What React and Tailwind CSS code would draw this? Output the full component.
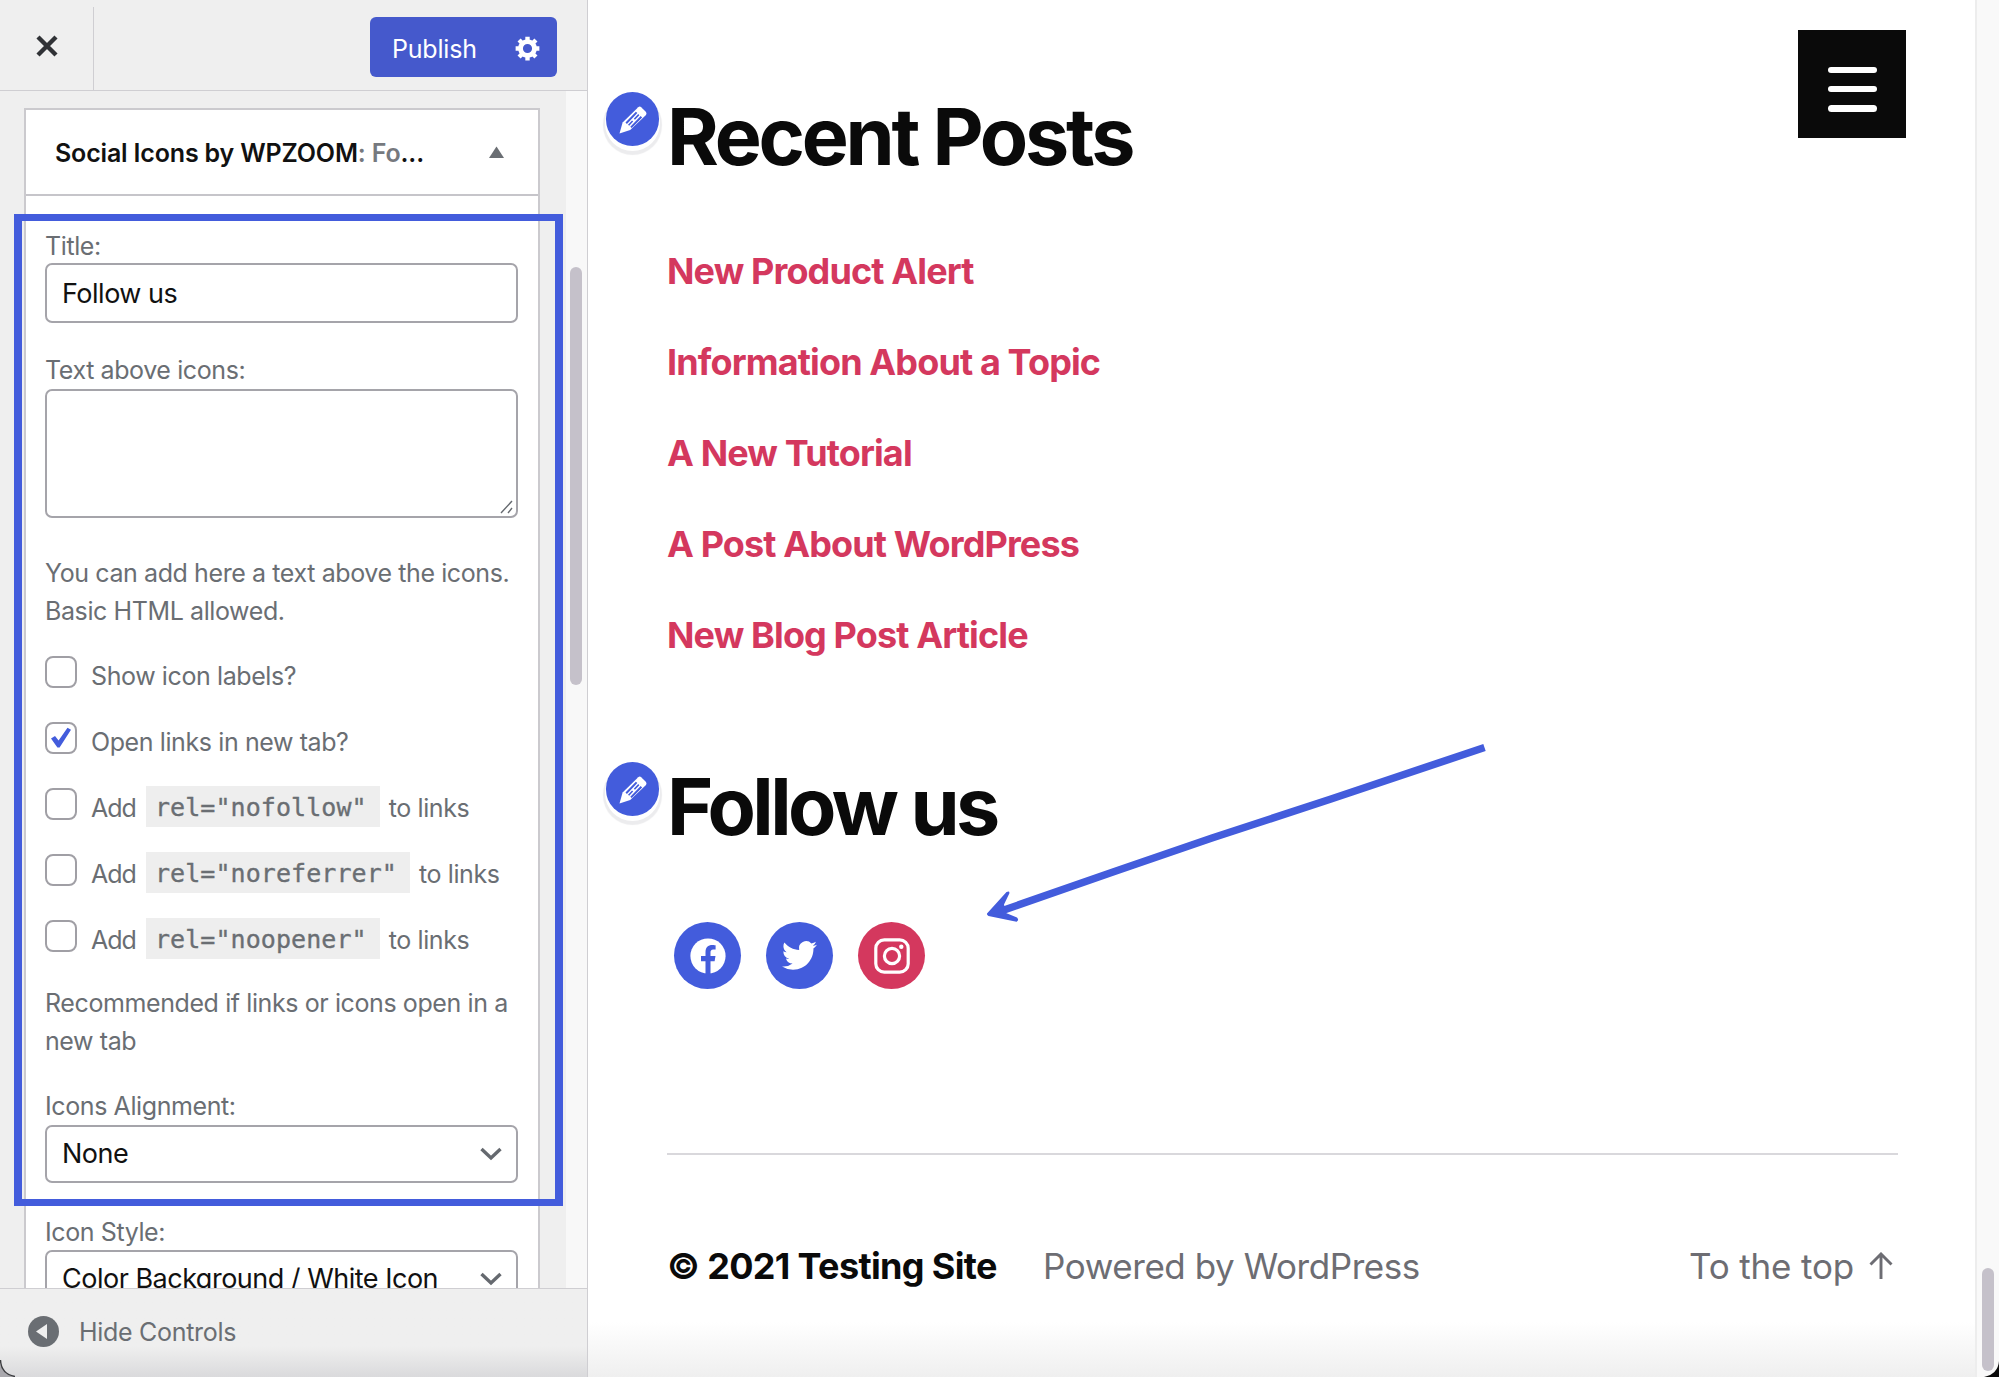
import React from "react";

const label = "block h-[34px] leading-[34px]";
const field = "w-[473px] rounded-[7px] border-2 border-[#a5a4aa] bg-white text-[27px] tracking-[-0.5px] text-[#111]";

function Chevron() {
  return (
    <svg width="22" height="14" viewBox="0 0 22 14" fill="none">
      <path d="M1.5 2 L11 11 L20.5 2" stroke="#65696f" strokeWidth="3.4" />
    </svg>
  );
}

function SelectBox({ value, className }) {
  return (
    <div className={`${field} flex h-[58px] items-center justify-between pr-[14px] pl-[15px] ${className}`}>
      <span className="mt-[1px]">{value}</span>
      <Chevron />
    </div>
  );
}

function CheckRow({ checked, children }) {
  return (
    <div className="flex h-[66px] items-center">
      <span className="-mt-[9px] mr-[14px] flex h-[32px] w-[32px] items-center justify-center rounded-[8px] border-2 border-[#a09fa5] bg-white">
        {checked && (
          <svg width="24" height="22" viewBox="0 0 24 22">
            <path d="M2 11.5 L6 9 L9.6 13.6 L18.5 0.8 L22 2.8 L10.6 20.5 L8.4 20.5 Z" fill="#435cdc" />
          </svg>
        )}
      </span>
      {children}
    </div>
  );
}

function RelRow({ rel }) {
  return (
    <CheckRow>
      <span className="mt-[1px] tracking-[-1px]">Add</span>
      <code className="mr-[9px] ml-[10px] -mt-[3px] h-[41px] bg-[#eeeeee] pr-[13px] pl-[9px] font-['DejaVu_Sans_Mono',monospace] text-[25px] leading-[43px] tracking-[0.08px] [-webkit-text-stroke:0.35px_#6a6e73]">
        {`rel="${rel}"`}
      </code>
      <span className="mt-[1px]">to links</span>
    </CheckRow>
  );
}

function Sidebar() {
  return (
    <aside className="relative flex h-full w-[588px] shrink-0 flex-col border-r border-[#cfced2] bg-[#efefef] text-[25px] tracking-[-0.4px] text-[#6a6e73]">
      <header className="flex h-[91px] shrink-0 border-b border-[#cfced2]">
        <div className="mt-[7px] flex w-[94px] justify-center border-r border-[#cfced2] pt-[27px]">
          <svg width="24" height="24" viewBox="0 0 24 24">
            <path d="M3 3 L21 21 M21 3 L3 21" stroke="#303236" strokeWidth="4.4" />
          </svg>
        </div>
        <button className="mt-[17px] mr-[30px] ml-auto flex h-[60px] w-[187px] items-center justify-between rounded-[6px] bg-[#4559cc] pr-[17px] pl-[22px] tracking-[-0.2px] text-white">
          <span className="mt-[5px]">Publish</span>
          <svg className="mt-[2px]" width="25" height="25" viewBox="0 0 24 24" fill="none">
            <circle cx="12" cy="12" r="6.7" stroke="#fff" strokeWidth="4.6" />
            <path d="M12 0.6V5M12 19V23.4M0.6 12H5M19 12H23.4M3.9 3.9L7 7M17 17L20.1 20.1M3.9 20.1L7 17M17 7L20.1 3.9" stroke="#fff" strokeWidth="4.2" />
          </svg>
        </button>
      </header>

      <div className="flex min-h-0 flex-1 overflow-hidden">
        <section className="mt-[17px] ml-[24px] h-[1300px] w-[516px] shrink-0 border-2 border-[#cbcace] bg-white">
          <div className="flex h-[86px] items-center border-b-2 border-[#c6c5ca] pr-[34px] pl-[29px] font-semibold">
            <span className="mt-[3px] whitespace-nowrap tracking-[-0.17px] text-[#111]">
              Social Icons by WPZOOM<span className="text-[#76797e]">: Fo</span>...
            </span>
            <svg className="ml-auto" width="15" height="12" viewBox="0 0 15 12">
              <path d="M7.5 0.5 L15 12 H0 Z" fill="#6a6e73" />
            </svg>
          </div>
          <div className="pt-[33px] pl-[19px]">
            <label className={label}>Title:</label>
            <div className={`${field} flex h-[60px] items-center pt-[2px] pl-[15px]`}>Follow us</div>
            <label className={`${label} mt-[30px]`}>Text above icons:</label>
            <div className={`${field} mt-[2px] flex h-[129px] items-end justify-end`}>
              <svg className="m-[2px]" width="14" height="14" viewBox="0 0 14 14">
                <path d="M1 13 L12 1 M8 13 L12 8" stroke="#65696f" strokeWidth="1.4" />
              </svg>
            </div>
            <p className="mt-[36px] whitespace-nowrap leading-[38px]">
              You can add here a text above the icons.
              <br />
              Basic HTML allowed.
            </p>
            <div className="mt-[13px]">
              <CheckRow><span className="mt-[1px]">Show icon labels?</span></CheckRow>
              <CheckRow checked><span className="mt-[1px]">Open links in new tab?</span></CheckRow>
              <RelRow rel="nofollow" />
              <RelRow rel="noreferrer" />
              <RelRow rel="noopener" />
            </div>
            <p className="mt-[11px] whitespace-nowrap leading-[38px]">
              Recommended if links or icons open in a
              <br />
              new tab
            </p>
            <label className={`${label} mt-[29px]`}>Icons Alignment:</label>
            <SelectBox value="None" className="mt-[2px]" />
            <label className={`${label} mt-[32px]`}>Icon Style:</label>
            <SelectBox value="Color Background / White Icon" className="mt-[1px]" />
          </div>
        </section>
        <div className="ml-auto w-[21px] bg-[#f8f8f8] pt-[176px] pl-[4px]">
          <div className="h-[418px] w-[12px] rounded-full bg-[#c5c1ca]" />
        </div>
      </div>

      <footer className="flex h-[89px] shrink-0 items-center border-t border-[#cfced2] bg-linear-to-b from-[#efefef] from-65% to-[#dadadc] pl-[28px]">
        <svg className="-mt-[3px]" width="31" height="31" viewBox="0 0 31 31">
          <circle cx="15.5" cy="15.5" r="15.5" fill="#6a6e73" />
          <path d="M8 15.5 L19 8 V23 Z" fill="#efefef" />
        </svg>
        <span className="ml-[20px] tracking-[-0.3px]">Hide Controls</span>
      </footer>

      {/* highlight frame over the widget form */}
      <div className="absolute top-[214px] left-[14px] h-[992px] w-[549px] border-[8px] border-y-[7px] border-[#435cdc]" />
      {/* rounded window corner */}
      <svg className="absolute bottom-0 left-0" width="15" height="17" viewBox="0 0 15 17">
        <path d="M0 0 Q1 14 15 17 H0 Z" fill="#a9a8ad" />
        <path d="M0.5 0 Q1 14 15 16.5" fill="none" stroke="#3a3b3e" strokeWidth="1.4" />
      </svg>
    </aside>
  );
}

function EditButton() {
  return (
    <span className="absolute top-[-4px] left-[-61px] flex h-[54px] w-[53px] items-center justify-center rounded-full bg-[#435cdc] shadow-[0_4px_0_1px_#fff,0_6px_1px_3px_#ececee]">
      <svg className="mt-[2px]" width="28" height="28" viewBox="0 0 28 28">
        <path d="M19.2 1.2 Q20.8 0 22.2 1.2 L27 6 Q28 7.4 27 9 L11.2 24 L0.5 27.5 L3.6 16.6 Z" fill="#fff" />
        <path d="M7.2 17.2 L17.6 6.4 M12 21.4 L22.4 10.8" stroke="#435cdc" strokeWidth="2" />
        <path d="M9.6 19.2 L13.6 15 M15.4 13.2 L19.8 8.6" stroke="#435cdc" strokeWidth="1.6" />
      </svg>
    </span>
  );
}

function Heading({ children, className }) {
  return (
    <div className={`relative ${className}`}>
      <EditButton />
      <h2 className="h-[80px] text-[79px] leading-[80px] font-bold text-[#0a0a0a]">{children}</h2>
    </div>
  );
}

const posts = ["New Product Alert", "Information About a Topic", "A New Tutorial", "A Post About WordPress", "New Blog Post Article"];

function Preview() {
  return (
    <main className="relative flex h-full flex-1 flex-col bg-linear-to-b from-white from-96% to-[#efefef] pl-[79px]">
      <Heading className="mt-[96px] tracking-[-3.25px]">Recent Posts</Heading>
      <ul className="mt-[50px] text-[36px] font-bold tracking-[-0.87px] text-[#d4385e]">
        {posts.map((p) => (
          <li key={p} className="h-[91px] leading-[91px]">{p}</li>
        ))}
      </ul>
      <Heading className="mt-[85px] tracking-[-3.6px]">Follow us</Heading>
      <div className="mt-[76px] ml-[7px] flex gap-[25px]">
        <span className="flex h-[67px] w-[67px] items-center justify-center rounded-full bg-[#435cdc]">
          <svg width="36" height="36" viewBox="0 0 36 36">
            <circle cx="18" cy="18" r="17.6" fill="#fff" />
            <path d="M15.5 36 V23.2 H11 V18 H15.5 V14.2 C15.5 9.5 18 7 22.4 7 C24 7 25.6 7.3 25.6 7.3 V11.6 H23.3 C21 11.6 20.5 13 20.5 14.5 V18 H25.5 L24.6 23.2 H20.5 V36 Z" fill="#435cdc" />
          </svg>
        </span>
        <span className="flex h-[67px] w-[67px] items-center justify-center rounded-full bg-[#435cdc]">
          <svg width="35" height="35" viewBox="0 0 24 24" fill="#fff">
            <path d="M23.953 4.57a10 10 0 01-2.825.775 4.958 4.958 0 002.163-2.723c-.951.555-2.005.959-3.127 1.184a4.92 4.92 0 00-8.384 4.482C7.69 8.095 4.067 6.13 1.64 3.162a4.822 4.822 0 00-.666 2.475c0 1.71.87 3.213 2.188 4.096a4.904 4.904 0 01-2.228-.616v.06a4.923 4.923 0 003.946 4.827 4.996 4.996 0 01-2.212.085 4.936 4.936 0 004.604 3.417 9.867 9.867 0 01-6.102 2.105c-.39 0-.779-.023-1.17-.067a13.995 13.995 0 007.557 2.209c9.053 0 13.998-7.496 13.998-13.985 0-.21 0-.42-.015-.63A9.935 9.935 0 0024 4.59z" />
          </svg>
        </span>
        <span className="flex h-[67px] w-[67px] items-center justify-center rounded-full bg-[#d4385e]">
          <svg width="36" height="36" viewBox="0 0 36 36" fill="none" stroke="#fff" strokeWidth="3.2">
            <rect x="1.8" y="1.8" width="32.4" height="32.4" rx="8.5" />
            <circle cx="18" cy="18" r="7.6" />
            <circle cx="27.3" cy="8.7" r="2.2" fill="#fff" stroke="none" />
          </svg>
        </span>
      </div>
      <div className="mt-[164px] h-[2px] w-[1231px] bg-[#d9d8dc]" />
      <footer className="mt-[91px] flex h-[40px] w-[1231px] items-center text-[36px] leading-[40px] whitespace-nowrap">
        <span className="w-[376px] font-bold tracking-[-0.65px] text-[#0a0a0a]">© 2021 Testing Site</span>
        <span className="text-[35px] tracking-[-0.43px] text-[#6d6d73]">Powered by WordPress</span>
        <span className="ml-auto text-[35px] tracking-[-0.17px] text-[#6d6d73]">To the top</span>
        <svg className="mr-[5px] ml-[15px]" width="24" height="28" viewBox="0 0 24 28">
          <path d="M12 27 V2 M1.5 12.5 L12 2 L22.5 12.5" fill="none" stroke="#6d6d73" strokeWidth="2.9" />
        </svg>
      </footer>

      <button className="absolute top-[30px] right-[69px] flex h-[108px] w-[108px] flex-col items-center gap-[13px] bg-[#0a0a0a] pt-[37px]">
        <span className="h-[6px] w-[49px] rounded-full bg-white" />
        <span className="h-[6px] w-[49px] rounded-full bg-white" />
        <span className="h-[7px] w-[49px] rounded-full bg-white" />
      </button>
      {/* pointer arrow towards the social icons */}
      <svg className="absolute top-[730px] left-[392px]" width="520" height="200" viewBox="0 0 520 200">
        <path d="M504.5 17.5 L351 69 L232 108 L133 142 L24 180" fill="none" stroke="#435cdc" strokeWidth="7.5" />
        <path d="M7 183.5 L26.5 162 Q30 160.5 29.3 163.5 L24 174.5 L26 183 L37 187.5 Q39.5 190.5 36.5 191.7 L8.5 186 Q6.6 185 7 183.5 Z" fill="#435cdc" />
      </svg>
    </main>
  );
}

export default function App() {
  return (
    <div className="flex h-[1377px] w-[1999px] overflow-hidden bg-white font-['Inter',sans-serif]">
      <Sidebar />
      <Preview />
      <div className="relative flex h-full w-[24px] shrink-0 flex-col justify-end border-l-2 border-[#ededed] bg-[#f9f9f9] pb-[6px] pl-[5px]">
        <div className="h-[103px] w-[12px] rounded-full bg-[#c5c1ca]" />
        <svg className="absolute right-0 bottom-0" width="15" height="16" viewBox="0 0 15 16">
          <path d="M15 0 Q14 13 0 16 H15 Z" fill="#0a0a0a" />
        </svg>
      </div>
    </div>
  );
}
